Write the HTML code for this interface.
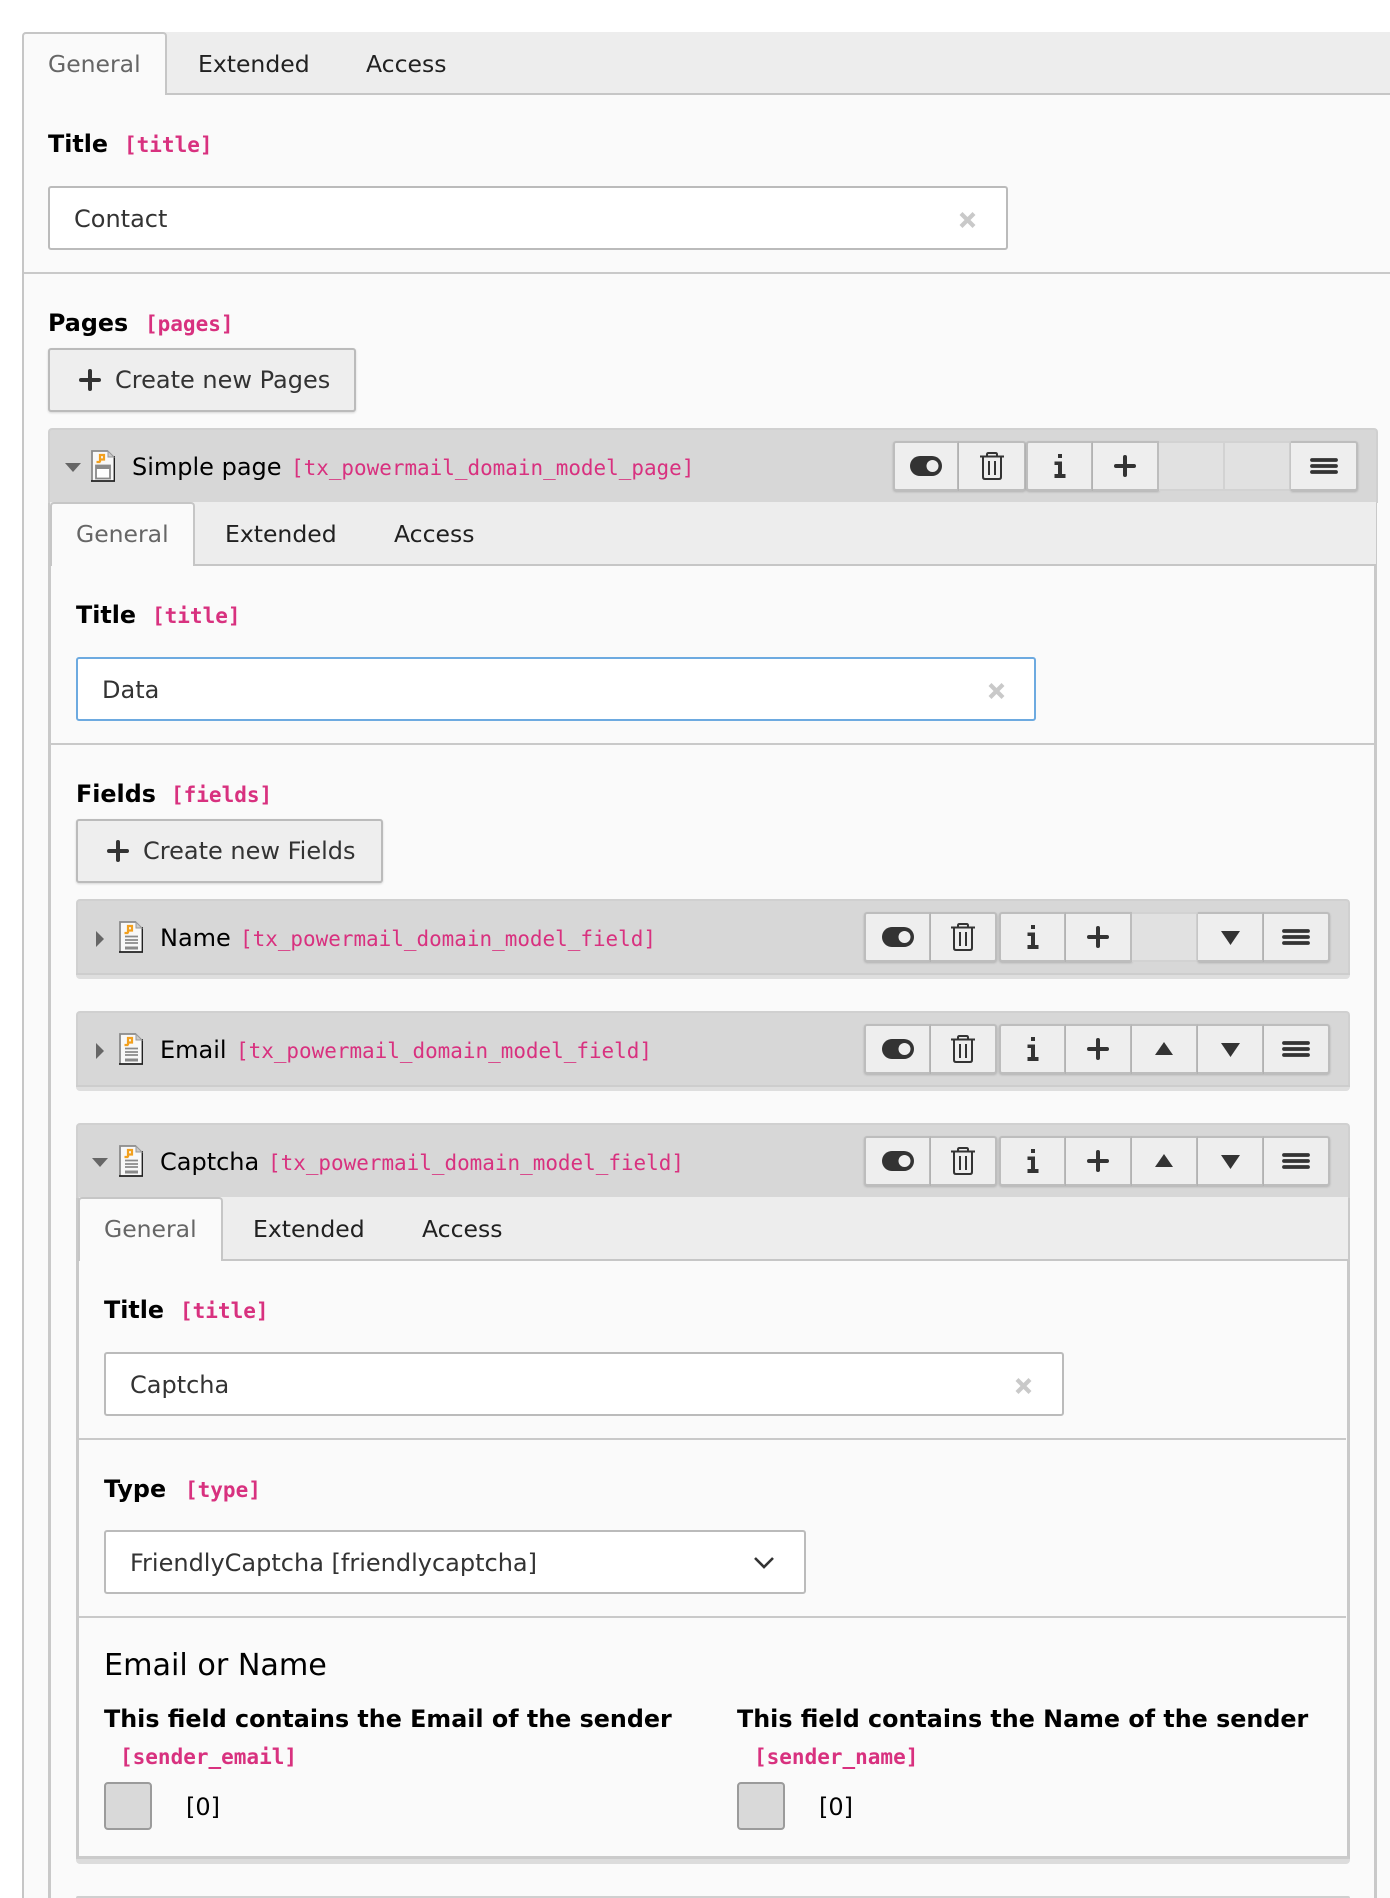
<!DOCTYPE html>
<html><head><meta charset="utf-8"><title>Contact</title>
<style>
html,body{margin:0;padding:0;background:#fff;width:1390px;height:1898px;overflow:hidden}
body{position:relative;font-family:"DejaVu Sans","Liberation Sans",sans-serif;font-size:24px;color:#000}
div,span,svg{box-sizing:border-box}
.a{position:absolute}
.t{position:absolute;white-space:nowrap;line-height:30px;height:30px}
.tb{font-size:23.5px}
.c{color:#212121}
.g{color:#666}
.d{color:#333}
.l{font-weight:bold;font-size:23.8px}
.m{font-family:"DejaVu Sans Mono","Liberation Mono",monospace;color:#d8317f;font-size:20.95px}
.mb{font-family:"DejaVu Sans Mono","Liberation Mono",monospace;color:#d8317f;font-size:21px;font-weight:bold}
.bar{position:absolute;background:#ededed;border-bottom:2px solid #c6c6c6;height:63px}
.bar.x{height:64px}
.tab{position:absolute;background:#fafafa;border:2px solid #c6c6c6;border-bottom:0;border-radius:4px 4px 0 0;height:63px}
.tab.x{height:64px}
.inp{position:absolute;background:#fff;border:2px solid #bbb;border-radius:3px;height:64px}
.sep{position:absolute;height:2px;background:#c9c9c9}
.btn{position:absolute;background:#eee;border:2px solid #bbb;border-radius:3px;box-shadow:0 1px 2px rgba(0,0,0,.15);height:64px}
.ph{position:absolute;background:#d7d7d7;border:2px solid #d0d0d0;border-radius:4px 4px 0 0}
.sh{position:absolute;background:#dedede;border-top:2px solid #cdcdcd;border-radius:0 0 4px 4px;height:6px}
.bg{position:absolute;display:flex;height:50px}
.b{width:66px;height:50px;background:#eee;border:2px solid #bdbdbd;border-left-width:0;box-shadow:0 1px 2px rgba(0,0,0,.18);position:relative}
.b.w{width:67px}
.b:first-child{border-left-width:2px;border-radius:3px 0 0 3px}
.b:last-child{border-radius:0 3px 3px 0}
.b svg{position:absolute;left:50%;top:50%;margin:-25px 0 0 -33px;width:66px;height:50px}
.b.off{background:#e1e1e1;border-color:#d2d2d2;box-shadow:none}
.cb{position:absolute;width:48px;height:48px;background:#d9d9d9;border:2px solid #9b9b9b;border-radius:4px}
svg.i{position:absolute;overflow:visible}
</style></head>
<body>
<svg width="0" height="0" style="position:absolute">
<defs>
<symbol id="tg" viewBox="0 0 66 50"><rect x="17" y="15" width="32" height="20" rx="10" fill="#333"/><circle cx="39.500" cy="25" r="6" fill="#eee"/></symbol>
<symbol id="tr" viewBox="0 0 66 50"><path d="M21 15.500H45M28 15V13.500Q28 12 29.500 12H36.500Q38 12 38 13.500V15M24 16V36Q24 38 26 38H40Q42 38 42 36V16M30 20V34M36 20V34" fill="none" stroke="#333" stroke-width="2"/></symbol>
<symbol id="in" viewBox="0 0 66 50"><path d="M31 13H35V17H31ZM27.500 20.500H35V33H38.500V37H27.500V33H31V24H27.500Z" fill="#333"/></symbol>
<symbol id="pl" viewBox="0 0 66 50"><path d="M24 25H42M33 16V34" stroke="#333" stroke-width="4" stroke-linecap="round"/></symbol>
<symbol id="up" viewBox="0 0 66 50"><path d="M33 18L42 31H24Z" fill="#333"/></symbol>
<symbol id="dn" viewBox="0 0 66 50"><path d="M24 19H43L33.500 33Z" fill="#333"/></symbol>
<symbol id="bu" viewBox="0 0 66 50"><path d="M21 19H45M21 25H45M21 31H45" stroke="#333" stroke-width="3.800" stroke-linecap="round"/></symbol>
<symbol id="x" viewBox="0 0 17 16"><path d="M2 1.500L15 14.500M15 1.500L2 14.500" stroke="#c9c9c9" stroke-width="4.200"/></symbol>
<symbol id="doc" viewBox="0 0 24 32"><path d="M1 1H17L23 7V31H1Z" fill="#f8f8f8"/><path d="M1 31V1H17" fill="none" stroke="#8a8a8a" stroke-width="1.800"/><path d="M0 31H23.500V6" fill="none" stroke="#222" stroke-width="1.800"/><path d="M17 1L23 7H17Z" fill="#ccc" stroke="#999"/><path d="M9 12V5H13V9.500H9M5.500 12H9.500" fill="none" stroke="#f2a01e" stroke-width="2.200"/><path d="M6 15.500H19M6 19H19M6 22H19" stroke="#8a8a8a" stroke-width="1.800"/><path d="M6 27H19" stroke="#8a8a8a" stroke-width="3"/></symbol>
<symbol id="doc2" viewBox="0 0 24 32"><path d="M1 1H17L23 7V31H1Z" fill="#f8f8f8"/><path d="M1 31V1H17" fill="none" stroke="#8a8a8a" stroke-width="1.800"/><path d="M0 31H23.500V6" fill="none" stroke="#222" stroke-width="1.800"/><path d="M17 1L23 7H17Z" fill="#ccc" stroke="#999"/><path d="M9 12V5H13V9.500H9M5.500 12H9.500" fill="none" stroke="#f2a01e" stroke-width="2.200"/><rect x="5" y="15.500" width="14" height="13" fill="#fff" stroke="#8a8a8a" stroke-width="1.800"/><rect x="5" y="15.500" width="14" height="3.500" fill="#8a8a8a"/></symbol>
</defs>
</svg>

<!-- outer -->
<div class="a" style="left:22px;top:94px;width:1368px;height:1804px;background:#fafafa;border-left:2px solid #c6c6c6"></div>
<div class="bar" style="left:24px;top:32px;width:1366px"></div>
<div class="tab" style="left:22px;top:32px;width:145px"></div>
<div class="t g tb" style="left:48px;top:49px">General</div>
<div class="t c tb" style="left:198px;top:49px">Extended</div>
<div class="t c tb" style="left:366px;top:49px">Access</div>

<div class="t l" style="left:48px;top:129px">Title</div>
<div class="t mb" style="left:124px;top:130px">[title]</div>
<div class="inp" style="left:48px;top:186px;width:960px"></div>
<div class="t d" style="left:74px;top:204px">Contact</div>
<svg class="i" style="left:959px;top:212px" width="17" height="16"><use href="#x"/></svg>
<div class="sep" style="left:24px;top:272px;width:1366px"></div>

<div class="t l" style="left:48px;top:308px">Pages</div>
<div class="t mb" style="left:145px;top:309px">[pages]</div>
<div class="btn" style="left:48px;top:348px;width:308px"></div>
<svg class="i" style="left:57px;top:355px" width="66" height="50"><use href="#pl"/></svg>
<div class="t d" style="left:115px;top:365px">Create new Pages</div>

<!-- panel 1 -->
<div class="a" style="left:48px;top:500px;width:1329px;height:1398px;background:#fafafa;border-left:3px solid #c9c9c9;border-right:3px solid #c9c9c9"></div>
<div class="ph" style="left:48px;top:428px;width:1330px;height:75px;border-bottom:0"></div>
<svg class="i" style="left:65px;top:463px" width="16" height="9"><path d="M0 0H16L8 9Z" fill="#666"/></svg>
<svg class="i" style="left:91px;top:450px" width="24" height="32"><use href="#doc2"/></svg>
<div class="t" style="left:132px;top:452px">Simple page</div>
<div class="t m" style="left:291px;top:453px">[tx_powermail_domain_model_page]</div>
<div class="bg" style="left:893px;top:441px"><div class="b"><svg><use href="#tg"/></svg></div><div class="b w"><svg><use href="#tr"/></svg></div></div>
<div class="bg" style="left:1026px;top:441px"><div class="b w"><svg><use href="#in"/></svg></div><div class="b"><svg><use href="#pl"/></svg></div><div class="b off"></div><div class="b off"></div><div class="b w"><svg><use href="#bu"/></svg></div></div>
<div class="bar x" style="left:50px;top:502px;width:1326px"></div>
<div class="tab x" style="left:50px;top:502px;width:145px"></div>
<div class="t g tb" style="left:76px;top:519px">General</div>
<div class="t c tb" style="left:225px;top:519px">Extended</div>
<div class="t c tb" style="left:394px;top:519px">Access</div>
<div class="t l" style="left:76px;top:600px">Title</div>
<div class="t mb" style="left:152px;top:601px">[title]</div>
<div class="inp" style="left:76px;top:657px;width:960px;border-color:#6daae0"></div>
<div class="t d" style="left:102px;top:675px">Data</div>
<svg class="i" style="left:988px;top:683px" width="17" height="16"><use href="#x"/></svg>
<div class="sep" style="left:51px;top:743px;width:1323px"></div>
<div class="t l" style="left:76px;top:779px">Fields</div>
<div class="t mb" style="left:171px;top:780px">[fields]</div>
<div class="btn" style="left:76px;top:819px;width:307px"></div>
<svg class="i" style="left:85px;top:826px" width="66" height="50"><use href="#pl"/></svg>
<div class="t d" style="left:143px;top:836px">Create new Fields</div>

<!-- Name -->
<div class="ph" style="left:76px;top:899px;width:1274px;height:75px;border-bottom:0"></div>
<div class="sh" style="left:76px;top:973px;width:1274px"></div>
<svg class="i" style="left:96px;top:931px" width="8" height="16"><path d="M0 0L8 8L0 16Z" fill="#666"/></svg>
<svg class="i" style="left:119px;top:921px" width="24" height="32"><use href="#doc"/></svg>
<div class="t" style="left:160px;top:923px">Name</div>
<div class="t m" style="left:240px;top:924px">[tx_powermail_domain_model_field]</div>
<div class="bg" style="left:864px;top:912px"><div class="b w"><svg><use href="#tg"/></svg></div><div class="b"><svg><use href="#tr"/></svg></div></div>
<div class="bg" style="left:999px;top:912px"><div class="b w"><svg><use href="#in"/></svg></div><div class="b"><svg><use href="#pl"/></svg></div><div class="b off"></div><div class="b"><svg><use href="#dn"/></svg></div><div class="b"><svg><use href="#bu"/></svg></div></div>

<!-- Email -->
<div class="ph" style="left:76px;top:1011px;width:1274px;height:75px;border-bottom:0"></div>
<div class="sh" style="left:76px;top:1085px;width:1274px"></div>
<svg class="i" style="left:96px;top:1043px" width="8" height="16"><path d="M0 0L8 8L0 16Z" fill="#666"/></svg>
<svg class="i" style="left:119px;top:1033px" width="24" height="32"><use href="#doc"/></svg>
<div class="t" style="left:160px;top:1035px">Email</div>
<div class="t m" style="left:236px;top:1036px">[tx_powermail_domain_model_field]</div>
<div class="bg" style="left:864px;top:1024px"><div class="b w"><svg><use href="#tg"/></svg></div><div class="b"><svg><use href="#tr"/></svg></div></div>
<div class="bg" style="left:999px;top:1024px"><div class="b w"><svg><use href="#in"/></svg></div><div class="b"><svg><use href="#pl"/></svg></div><div class="b"><svg><use href="#up"/></svg></div><div class="b"><svg><use href="#dn"/></svg></div><div class="b"><svg><use href="#bu"/></svg></div></div>

<!-- Captcha -->
<div class="a" style="left:76px;top:1195px;width:1274px;height:664px;background:#fafafa;border-left:3px solid #c9c9c9;border-right:3px solid #c9c9c9;border-bottom:3px solid #cbcbcb"></div>
<div class="a" style="left:76px;top:1859px;width:1274px;height:5px;background:#dcdcdc;border-radius:0 0 4px 4px"></div>
<div class="ph" style="left:76px;top:1123px;width:1274px;height:75px;border-bottom:0"></div>
<svg class="i" style="left:92px;top:1158px" width="16" height="9"><path d="M0 0H16L8 9Z" fill="#666"/></svg>
<svg class="i" style="left:119px;top:1145px" width="24" height="32"><use href="#doc"/></svg>
<div class="t" style="left:160px;top:1147px">Captcha</div>
<div class="t m" style="left:268px;top:1148px">[tx_powermail_domain_model_field]</div>
<div class="bg" style="left:864px;top:1136px"><div class="b w"><svg><use href="#tg"/></svg></div><div class="b"><svg><use href="#tr"/></svg></div></div>
<div class="bg" style="left:999px;top:1136px"><div class="b w"><svg><use href="#in"/></svg></div><div class="b"><svg><use href="#pl"/></svg></div><div class="b"><svg><use href="#up"/></svg></div><div class="b"><svg><use href="#dn"/></svg></div><div class="b"><svg><use href="#bu"/></svg></div></div>
<div class="bar x" style="left:79px;top:1197px;width:1269px"></div>
<div class="tab x" style="left:78px;top:1197px;width:145px"></div>
<div class="t g tb" style="left:104px;top:1214px">General</div>
<div class="t c tb" style="left:253px;top:1214px">Extended</div>
<div class="t c tb" style="left:422px;top:1214px">Access</div>
<div class="t l" style="left:104px;top:1295px">Title</div>
<div class="t mb" style="left:180px;top:1296px">[title]</div>
<div class="inp" style="left:104px;top:1352px;width:960px"></div>
<div class="t d" style="left:130px;top:1370px">Captcha</div>
<svg class="i" style="left:1015px;top:1378px" width="17" height="16"><use href="#x"/></svg>
<div class="sep" style="left:79px;top:1438px;width:1267px"></div>
<div class="t l" style="left:104px;top:1474px">Type</div>
<div class="t mb" style="left:185px;top:1475px">[type]</div>
<div class="inp" style="left:104px;top:1530px;width:702px"></div>
<div class="t d" style="left:130px;top:1548px">FriendlyCaptcha [friendlycaptcha]</div>
<svg class="i" style="left:753px;top:1556px" width="22" height="13"><path d="M2 2L11 11L20 2" fill="none" stroke="#333" stroke-width="2.600"/></svg>
<div class="sep" style="left:79px;top:1616px;width:1267px"></div>
<div class="t" style="left:104px;top:1651px;font-size:30.2px">Email or Name</div>
<div class="t l" style="left:104px;top:1704px">This field contains the Email of the sender</div>
<div class="t l" style="left:737px;top:1704px">This field contains the Name of the sender</div>
<div class="t mb" style="left:120px;top:1742px">[sender_email]</div>
<div class="t mb" style="left:754px;top:1742px">[sender_name]</div>
<div class="cb" style="left:104px;top:1782px"></div>
<div class="cb" style="left:737px;top:1782px"></div>
<div class="t" style="left:186px;top:1792px">[0]</div>
<div class="t" style="left:819px;top:1792px">[0]</div>
<div class="a" style="left:76px;top:1896px;width:1274px;height:2px;background:#cfcfcf;border-radius:4px 4px 0 0"></div>
</body></html>
